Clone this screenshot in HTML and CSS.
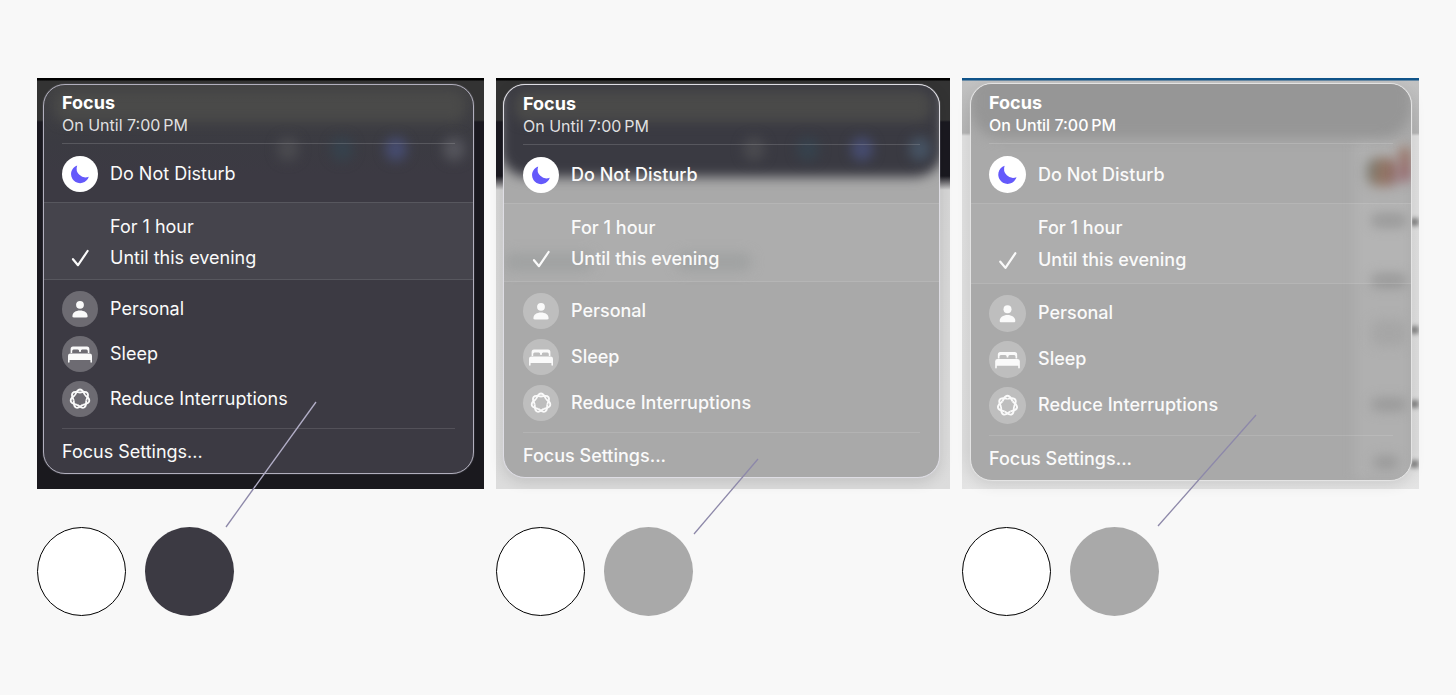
FILE: index.html
```html
<!DOCTYPE html>
<html lang="en">
  <head>
    <meta charset="UTF-8" />
    <meta name="viewport" content="width=device-width, initial-scale=1.0" />
    <title>Focus menu contrast</title>
    <link rel="stylesheet" href="styles.css" />
  </head>
  <body>
    <!-- shared icons -->
    <svg class="sprite" aria-hidden="true">
      <symbol id="moon" viewBox="0 0 36 36">
        <path d="M15.2 9.4A9.1 9.1 0 1 0 26.8 20.7A8.9 8.9 0 0 1 15.2 9.4Z" />
      </symbol>
      <symbol id="check" viewBox="0 0 36 36">
        <path d="M11 19.2L16 25.2L25.6 11" fill="none" stroke="currentColor" stroke-width="2.2" stroke-linecap="round" stroke-linejoin="round" />
      </symbol>
      <symbol id="person" viewBox="0 0 36 36">
        <circle cx="18" cy="13.8" r="3.9" />
        <path d="M10.4 25.2C10.4 21.6 13.8 19.5 18 19.5S25.6 21.6 25.6 25.2C25.6 26 25 26.4 24.3 26.4H11.7C11 26.4 10.4 26 10.4 25.2Z" />
      </symbol>
      <symbol id="bed" viewBox="0 0 36 36">
        <path d="M8.6 17V13.2Q8.6 10.6 11 10.6H25Q27.4 10.6 27.4 13.2V17H25.8V15.2Q25.8 13.6 24.4 13.6H20.2Q18.8 13.6 18.8 15.2V16H17.2V15.2Q17.2 13.6 15.8 13.6H11.6Q10.2 13.6 10.2 15.2V17Z" />
        <path d="M6 25.8V19.8Q6 17.4 8.4 17.4H27.6Q30 17.4 30 19.8V25.8Q30 26.7 29.2 26.7Q28.4 26.7 28.4 25.8V24H7.6V25.8Q7.6 26.7 6.8 26.7Q6 26.7 6 25.8Z" />
      </symbol>
      <symbol id="knot" viewBox="-18 -18 36 36">
        <g fill="none" stroke="currentColor" stroke-width="1.8">
          <path id="lobe" d="M-5.08 -4.05C-3.3 -6.28 -3.1 -9.5 0 -9.5S3.3 -6.28 5.08 -4.05" />
          <use href="#lobe" transform="rotate(51.43)" />
          <use href="#lobe" transform="rotate(102.86)" />
          <use href="#lobe" transform="rotate(154.29)" />
          <use href="#lobe" transform="rotate(205.71)" />
          <use href="#lobe" transform="rotate(257.14)" />
          <use href="#lobe" transform="rotate(308.57)" />
        </g>
      </symbol>
    </svg>

    <main class="samples">
      <section class="sample sample-dark">
        <div class="stage">
          <div class="panel">
            <div class="blobs" aria-hidden="true">
              <span class="glow"></span>
              <span class="blob blob-a"></span>
              <span class="blob blob-b"></span>
              <span class="blob blob-c"></span>
              <span class="blob blob-d"></span>
            </div>
            <header class="heading">
              <h2>Focus</h2>
              <p>On Until 7:00&#8239;PM</p>
            </header>
            <button class="item current" type="button">
              <span class="icon icon-on"><svg><use href="#moon" /></svg></span>
              Do Not Disturb
            </button>
            <div class="durations">
              <button class="item" type="button"><span class="icon"></span>For 1 hour</button>
              <button class="item" type="button">
                <span class="icon"><svg><use href="#check" /></svg></span>
                Until this evening
              </button>
            </div>
            <div class="modes">
              <button class="item" type="button">
                <span class="icon icon-off"><svg><use href="#person" /></svg></span>
                Personal
              </button>
              <button class="item" type="button">
                <span class="icon icon-off"><svg><use href="#bed" /></svg></span>
                Sleep
              </button>
              <button class="item" type="button">
                <span class="icon icon-off"><svg><use href="#knot" /></svg></span>
                Reduce Interruptions
              </button>
            </div>
            <button class="settings" type="button">Focus Settings...</button>
          </div>
          <svg class="pointer" aria-hidden="true">
            <line class="pointer-light" x1="279" y1="324" x2="217" y2="410" />
            <line x1="217" y1="410" x2="189" y2="449" />
          </svg>
        </div>
        <div class="swatches">
          <span class="swatch swatch-text"></span>
          <span class="swatch swatch-back"></span>
        </div>
      </section>

      <section class="sample sample-mixed">
        <div class="stage">
          <div class="panel">
            <div class="blobs" aria-hidden="true">
              <span class="shade"></span>
              <span class="glow"></span>
              <span class="blob blob-a"></span>
              <span class="blob blob-b"></span>
              <span class="blob blob-c"></span>
              <span class="blob blob-d"></span>
              <span class="smear smear-left"></span>
              <span class="smear smear-mid"></span>
            </div>
            <header class="heading">
              <h2>Focus</h2>
              <p>On Until 7:00&#8239;PM</p>
            </header>
            <button class="item current" type="button">
              <span class="icon icon-on"><svg><use href="#moon" /></svg></span>
              Do Not Disturb
            </button>
            <div class="durations">
              <button class="item" type="button"><span class="icon"></span>For 1 hour</button>
              <button class="item" type="button">
                <span class="icon"><svg><use href="#check" /></svg></span>
                Until this evening
              </button>
            </div>
            <div class="modes">
              <button class="item" type="button">
                <span class="icon icon-off"><svg><use href="#person" /></svg></span>
                Personal
              </button>
              <button class="item" type="button">
                <span class="icon icon-off"><svg><use href="#bed" /></svg></span>
                Sleep
              </button>
              <button class="item" type="button">
                <span class="icon icon-off"><svg><use href="#knot" /></svg></span>
                Reduce Interruptions
              </button>
            </div>
            <button class="settings" type="button">Focus Settings...</button>
          </div>
          <svg class="pointer" aria-hidden="true">
            <line x1="262" y1="381" x2="198" y2="456" />
          </svg>
        </div>
        <div class="swatches">
          <span class="swatch swatch-text"></span>
          <span class="swatch swatch-back"></span>
        </div>
      </section>

      <section class="sample sample-light">
        <div class="stage">
          <div class="edge" aria-hidden="true">
            <span></span><span></span><span></span><span></span>
          </div>
          <div class="panel">
            <div class="blobs" aria-hidden="true">
              <span class="strip"></span>
              <span class="shade"></span>
              <span class="photo photo-a"></span>
              <span class="photo photo-b"></span>
              <span class="line line-a"></span>
              <span class="line line-b"></span>
              <span class="line line-c"></span>
              <span class="line line-d"></span>
              <span class="line line-e"></span>
            </div>
            <header class="heading">
              <h2>Focus</h2>
              <p>On Until 7:00&#8239;PM</p>
            </header>
            <button class="item current" type="button">
              <span class="icon icon-on"><svg><use href="#moon" /></svg></span>
              Do Not Disturb
            </button>
            <div class="durations">
              <button class="item" type="button"><span class="icon"></span>For 1 hour</button>
              <button class="item" type="button">
                <span class="icon"><svg><use href="#check" /></svg></span>
                Until this evening
              </button>
            </div>
            <div class="modes">
              <button class="item" type="button">
                <span class="icon icon-off"><svg><use href="#person" /></svg></span>
                Personal
              </button>
              <button class="item" type="button">
                <span class="icon icon-off"><svg><use href="#bed" /></svg></span>
                Sleep
              </button>
              <button class="item" type="button">
                <span class="icon icon-off"><svg><use href="#knot" /></svg></span>
                Reduce Interruptions
              </button>
            </div>
            <button class="settings" type="button">Focus Settings...</button>
          </div>
          <svg class="pointer" aria-hidden="true">
            <line x1="294" y1="337" x2="196" y2="448" />
          </svg>
        </div>
        <div class="swatches">
          <span class="swatch swatch-text"></span>
          <span class="swatch swatch-back"></span>
        </div>
      </section>
    </main>
  </body>
</html>
```

FILE: styles.css
```css
* {
  box-sizing: border-box;
}

body {
  margin: 0;
  background-color: #f8f8f8;
  font-family: Inter, "Liberation Sans", sans-serif;
  color: #fff;
}

.sprite {
  display: none;
}

.samples {
  display: grid;
  grid-template-columns: 447fr 454fr 457fr;
  gap: 12px;
  padding: 78px 37px;
}

/* backdrop behind each menu */
.stage {
  position: relative;
  display: flow-root;
}

.sample-dark .stage {
  padding: 6px 10px 15px 6px;
  background: linear-gradient(#000 2px, #333 3px, #333 42px, #1a1920 44px, #1a1920 70px, #1a191e);
}

.sample-mixed .stage {
  padding: 6px 10px 11px 7px;
  background: linear-gradient(#000 2px, #333 3px, #333 42px, #1a1920 44px, #1a1920 98px, #d6d6d6 112px, #dcdcdc);
}

.sample-light .stage {
  padding: 5px 7px 8px 8px;
  background: linear-gradient(#10548a 2px, #c2c2c2 3px, #b4b4b4 55px, #e0e0e0 58px, #dcdcdc 90%, #e4e4e4);
}

/* menu */
.panel {
  position: relative;
  isolation: isolate;
  overflow: hidden;
  border: 1px solid #b1afbd;
  border-radius: 22px;
}

.sample-dark .panel {
  background: linear-gradient(#414143, #3b3b42 56px, #3c3a43 90px);
  box-shadow: 0 0 1px 0 #b1afbd;
}

.sample-mixed .panel {
  border-color: #dedde4;
  background-color: #a9a9a9;
  box-shadow: 0 0 1px 0 #dedde4, 0 4px 14px rgba(0, 0, 0, 0.12);
}

.sample-light .panel {
  border-color: #e4e4e4;
  background-color: #a9a9a9;
  box-shadow: 0 0 1px 0 #e4e4e4, 0 4px 14px rgba(0, 0, 0, 0.1);
}

.heading {
  margin: 0 18px;
  padding: 7px 0;
  border-bottom: 1px solid rgba(255, 255, 255, 0.15);
}

.sample-mixed .heading {
  margin: 0 19px;
  padding-top: 8px;
}

.sample-light .heading {
  padding-top: 8px;
}

.heading h2,
.heading p {
  margin: 0;
  line-height: 22px;
}

.heading h2 {
  font-size: 18px;
  font-weight: 700;
}

.heading p {
  font-size: 16px;
  font-weight: 400;
  color: rgba(255, 255, 255, 0.85);
}

.sample-light .heading p {
  font-weight: 500;
  color: #fff;
}

.item,
.settings {
  display: flex;
  align-items: center;
  width: 100%;
  border: none;
  padding: 0 18px;
  background: none;
  font: inherit;
  font-size: 18px;
  line-height: 24px;
  color: #fafafa;
  text-align: left;
  cursor: pointer;
}

.item {
  gap: 12px;
}

.sample-mixed .item,
.sample-mixed .settings {
  padding: 0 19px;
  font-weight: 500;
}

.sample-light .item,
.sample-light .settings {
  font-weight: 500;
}

.sample .current {
  height: 58px;
  padding-top: 2px;
}

.sample-light .current {
  height: 59px;
}

.durations {
  padding: 8px 0 6px;
  border-top: 1px solid rgba(255, 255, 255, 0.1);
  border-bottom: 1px solid rgba(255, 255, 255, 0.1);
  background-color: rgba(255, 255, 255, 0.05);
}

.sample-mixed .durations,
.sample-light .durations {
  padding-bottom: 7px;
}

.durations .item {
  height: 31px;
}

.sample-light .durations .item {
  height: 32px;
}

.modes {
  margin: 0 18px;
  padding: 6px 0 7px;
  border-bottom: 1px solid rgba(255, 255, 255, 0.12);
}

.sample-mixed .modes {
  margin: 0 19px;
  padding-bottom: 6px;
}

.sample .modes .item {
  height: 45px;
  padding: 0;
}

.sample-mixed .modes .item,
.sample-light .modes .item {
  height: 46px;
}

.sample .settings {
  height: 44px;
  padding-top: 2px;
}

.icon {
  flex: none;
  width: 36px;
  border-radius: 50%;
}

.icon svg {
  display: block;
  width: 36px;
  height: 36px;
  fill: currentColor;
}

.sample-light .icon,
.sample-light .icon svg {
  width: 37px;
}

.sample-light .icon svg {
  height: 37px;
}

.icon-on {
  background-color: #fff;
  color: #6459fb;
}

.icon-off {
  background-color: rgba(255, 255, 255, 0.25);
}

/* wallpaper seen through the glass */
.blobs {
  position: absolute;
  inset: 0;
  z-index: -1;
}

.blobs span {
  position: absolute;
  filter: blur(6px);
}

.glow {
  top: 5px;
  left: 10px;
  right: 8px;
  height: 32px;
  border-radius: 12px;
  background-color: #4a4a49;
}

.blob {
  top: 52px;
  width: 22px;
  height: 24px;
  border-radius: 50%;
}

.blob-a {
  right: 174px;
  background-color: #4a4a4f;
}

.blob-b {
  right: 120px;
  background-color: #36424d;
}

.blob-c {
  right: 66px;
  background-color: #464c70;
}

.blob-d {
  right: 8px;
  background-color: #55555c;
}

.sample-mixed .blob-d {
  background-color: #465363;
}

.sample-mixed .shade {
  top: -20px;
  left: -4px;
  right: -4px;
  height: 112px;
  border-radius: 28px;
  background-color: #3a3a42;
}

.smear {
  top: 168px;
  height: 18px;
  border-radius: 9px;
  background-color: #9c9e9e;
}

.smear-left {
  left: 0;
  width: 90px;
}

.smear-mid {
  left: 172px;
  width: 76px;
}

.sample-light .shade {
  top: -20px;
  left: 0;
  right: 0;
  height: 74px;
  border-radius: 30px;
  background-color: #969696;
}

.strip {
  top: 56px;
  bottom: 0;
  right: 0;
  width: 56px;
  background-color: #b0b0b0;
}

.photo {
  top: 74px;
  height: 28px;
  border-radius: 10px;
}

.photo-a {
  right: 12px;
  width: 32px;
  background: linear-gradient(100deg, #6f7872, #957662 50%, #8d6870);
}

.photo-b {
  top: 62px;
  right: 0;
  width: 12px;
  height: 36px;
  background: linear-gradient(#9a7a66, #935f6a);
}

.line {
  right: 4px;
  width: 36px;
  height: 13px;
  border-radius: 7px;
  background-color: #939393;
}

.line-a {
  top: 130px;
}

.line-b {
  top: 190px;
}

.line-c {
  top: 236px;
  height: 26px;
  background-color: #a6a6a6;
}

.line-d {
  top: 314px;
  background-color: #999;
}

.line-e {
  top: 372px;
  right: 12px;
  width: 26px;
  background-color: #999;
}

/* text lines that stick out past the menu */
.edge span {
  position: absolute;
  right: 0;
  width: 10px;
  height: 8px;
  border-radius: 4px 0 0 4px;
  background-color: #888;
  filter: blur(2px);
  clip-path: inset(-8px 0 -8px -8px);
}

.edge span:nth-child(1) {
  top: 140px;
}

.edge span:nth-child(2) {
  top: 248px;
}

.edge span:nth-child(3) {
  top: 322px;
}

.edge span:nth-child(4) {
  top: 382px;
}

/* line from the menu to its colour */
.pointer {
  position: absolute;
  inset: 0;
  width: 100%;
  height: 100%;
  overflow: visible;
  pointer-events: none;
  stroke: #8d88a9;
  stroke-width: 1.3;
}

.pointer-light {
  stroke: #b3afc8;
}

.swatches {
  display: flex;
  gap: 19px;
  margin-top: 38px;
}

.swatch {
  width: 89px;
  height: 89px;
  border-radius: 50%;
}

.swatch-text {
  border: 1px solid #000;
  background-color: #fff;
}

.swatch-back {
  background-color: #a9a9a9;
}

.sample-dark .swatch-back {
  background-color: #3c3a43;
}
```
